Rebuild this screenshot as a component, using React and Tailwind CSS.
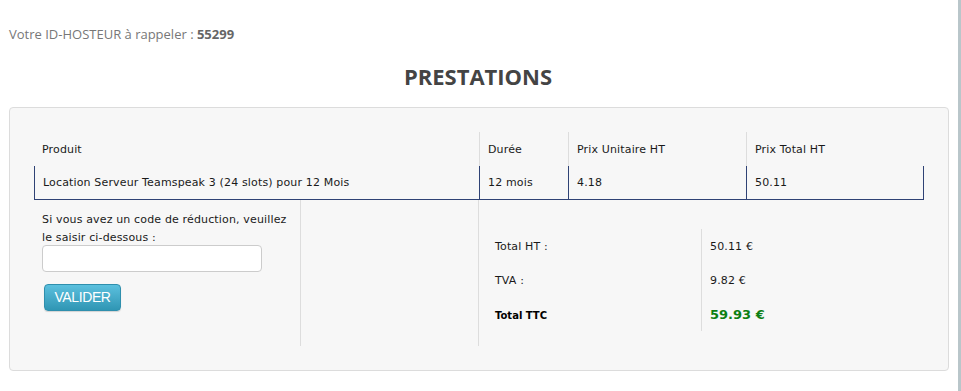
const navy = 'border-[#2f4275]';

const App = () => {
  return (
    <div className="w-full min-h-[391px] bg-white border-r-[3px] border-[#b9c6ca]">
      <div className="px-[9px]">
        <p className="pt-[25px] text-[13px] leading-[18px] text-[#777] font-['Open_Sans',sans-serif]">
          Votre ID-HOSTEUR à rappeler : <span className="font-bold text-[#666]">55299</span>
        </p>

        <h2 className="mt-[20px] text-center text-[22px] leading-[26px] font-bold text-[#444] font-['Open_Sans',sans-serif] pr-[2px]">
          PRESTATIONS
        </h2>

        <div className="mt-[18px] border border-[#dcdcdc] rounded-[4px] bg-[#f7f7f7] p-6 font-['DejaVu_Sans',Verdana,sans-serif] text-[11px] tracking-[0.15px] text-[#1a1a1a]">
          {/* header row */}
          <div className="grid grid-cols-[445px_89px_178px_178px] h-[34px]">
            <div className="flex items-center pl-[8px] pt-[2px]">Produit</div>
            <div className="flex items-center pl-[8px] pt-[2px] border-l border-[#dddddd]">Durée</div>
            <div className="flex items-center pl-[8px] pt-[2px] border-l border-[#dddddd]">Prix Unitaire HT</div>
            <div className="flex items-center pl-[8px] pt-[2px] border-l border-[#dddddd]">Prix Total HT</div>
          </div>

          {/* product row */}
          <div className={`grid grid-cols-[445px_89px_178px_178px] h-[34px] border-b ${navy}`}>
            <div className={`flex items-center pl-[8px] pt-[2px] border-l ${navy}`}>
              Location Serveur Teamspeak 3 (24 slots) pour 12 Mois
            </div>
            <div className={`flex items-center pl-[8px] pt-[2px] border-l ${navy}`}>12 mois</div>
            <div className={`flex items-center pl-[8px] pt-[2px] border-l ${navy}`}>4.18</div>
            <div className={`flex items-center pl-[8px] pt-[2px] border-l border-r ${navy}`}>50.11</div>
          </div>

          {/* bottom part */}
          <div className="flex h-[146px]">
            <div className="w-[267px] border-r border-[#dddddd] pl-[8px] pt-[9px]">
              <p className="leading-[18px] pt-[2px] h-[36px]">
                Si vous avez un code de réduction, veuillez
                <br />
                le saisir ci-dessous :
              </p>
              <input
                type="text"
                className="block w-[220px] h-[27px] bg-white border border-[#cccccc] rounded-[4px] px-2 outline-none"
              />
              <button className="mt-[12px] ml-[2px] w-[77px] h-[27px] rounded-[4px] border border-[#2f8fad] bg-gradient-to-b from-[#5bc0de] to-[#2f96b4] text-white text-[14px] tracking-[-0.4px] font-['Liberation_Sans',Arial,sans-serif] shadow-[0_1px_1px_rgba(0,0,0,0.15)]">
                VALIDER
              </button>
            </div>
            <div className="w-[178px] border-r border-[#dddddd]" />
            <div className="flex-1 pl-[8px] pr-[8px] pt-[29px]">
              <div className="grid grid-cols-[214px_1fr]">
                <div className="h-[34px] flex items-center pl-[8px] pt-[2px]">Total HT :</div>
                <div className="h-[34px] flex items-center pl-[8px] pt-[2px] border-l border-[#dddddd]">50.11 €</div>
                <div className="h-[34px] flex items-center pl-[8px] pt-[2px]">TVA :</div>
                <div className="h-[34px] flex items-center pl-[8px] pt-[2px] border-l border-[#dddddd]">9.82 €</div>
                <div className="h-[34px] flex items-center pl-[8px] pt-[2px] font-bold text-[10px] tracking-normal text-black">Total TTC</div>
                <div className="h-[34px] flex items-center pl-[8px] pt-[2px] border-l border-[#dddddd] font-bold text-[13px] tracking-normal text-[#0d7f12]">
                  59.93 €
                </div>
              </div>
            </div>
          </div>
        </div>
      </div>
    </div>
  );
};

export default App;
